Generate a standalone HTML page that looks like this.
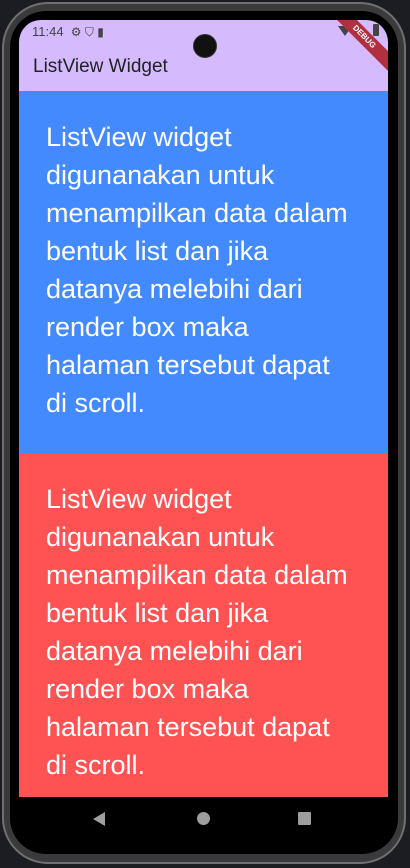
<!DOCTYPE html>
<html><head><style>
body{margin:0;width:410px;height:868px;background:#1c1d22;position:relative;overflow:hidden;font-family:"Liberation Sans",Roboto,sans-serif}
.frame{position:absolute;left:2px;top:2px;width:404px;height:862px;border-radius:46px;background:#3a3a3c;border:2px solid #707070;box-sizing:border-box}
.bezel{position:absolute;left:10px;top:11px;width:388px;height:843px;border-radius:36px;background:#000}
.screen{position:absolute;left:19px;top:20px;width:369px;height:820px;border-radius:22px;overflow:hidden;background:#000}
.bar{position:absolute;left:0;top:0;width:369px;height:71px;background:#d5bbfd}
.status{position:absolute;left:13px;top:4px;font-size:13px;color:#444}
.title{position:absolute;left:14px;top:36px;font-size:19px;color:#222}
.blk{position:absolute;left:0;width:369px;color:#fff;font-size:27px;line-height:38px;box-sizing:border-box;padding:0 0 0 27px;white-space:nowrap}
.blue{top:71px;height:362px;background:#448aff;padding-top:27px}
.red{top:433px;height:344px;background:#ff5252;padding-top:27px}
.nav{position:absolute;top:777px;left:0;width:369px;height:43px;background:#000}
.cam{position:absolute;left:193px;top:34px;width:22px;height:22px;border-radius:50%;background:#111;border:1px solid #333}
.debug{position:absolute;right:-26px;top:10px;width:100px;height:14px;background:#b03040;transform:rotate(45deg);color:#fff;font-size:8px;font-weight:bold;text-align:center;line-height:14px}
</style></head><body>
<div class="frame"></div>
<div class="bezel"></div>
<div class="screen">
<div class="bar">
<div class="status">11:44 &nbsp;<span style="font-size:12px">⚙ ⛉ ▮</span></div>
<div style="position:absolute;right:36px;top:6px;width:0;height:0;border-left:7px solid transparent;border-right:7px solid transparent;border-top:10px solid #444"></div>
<div style="position:absolute;right:9px;top:4px;width:6px;height:12px;background:#444;border-radius:1px"></div>
<div class="title">ListView Widget</div>
<div class="debug">DEBUG</div>
</div>
<div class="blk blue">ListView widget<br>digunanakan untuk<br>menampilkan data dalam<br>bentuk list dan jika<br>datanya melebihi dari<br>render box maka<br>halaman tersebut dapat<br>di scroll.</div>
<div class="blk red">ListView widget<br>digunanakan untuk<br>menampilkan data dalam<br>bentuk list dan jika<br>datanya melebihi dari<br>render box maka<br>halaman tersebut dapat<br>di scroll.</div>
<div class="nav">
<div style="position:absolute;left:74px;top:15px;width:0;height:0;border-top:7px solid transparent;border-bottom:7px solid transparent;border-right:12px solid #9e9e9e"></div>
<div style="position:absolute;left:178px;top:15px;width:13px;height:13px;border-radius:50%;background:#9e9e9e"></div>
<div style="position:absolute;left:279px;top:15px;width:13px;height:13px;background:#9e9e9e;border-radius:1px"></div>
</div>
</div>
<div class="cam"></div>
</body></html>
